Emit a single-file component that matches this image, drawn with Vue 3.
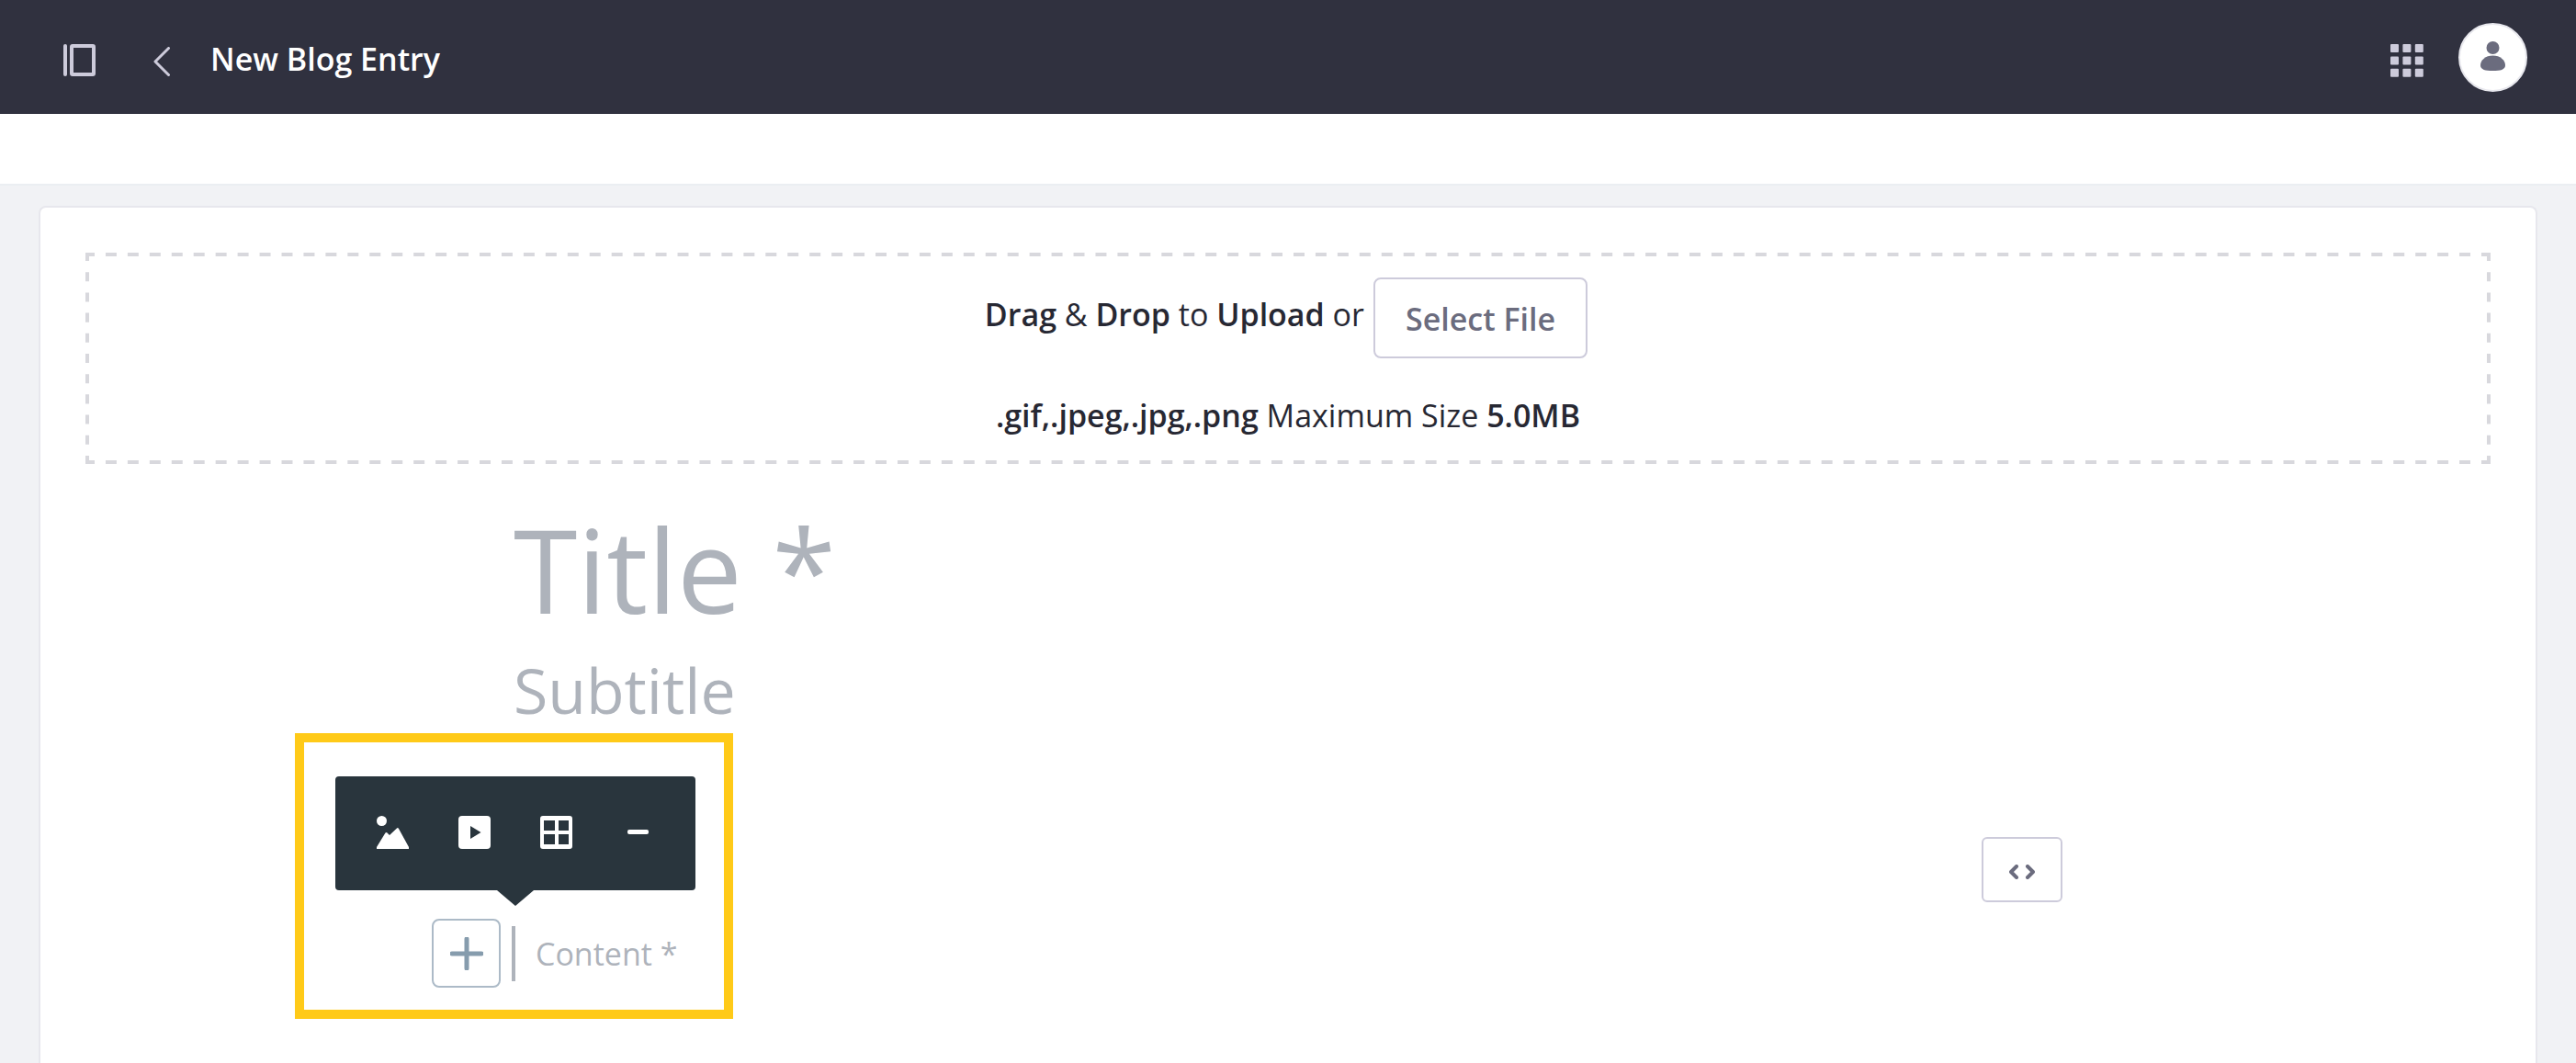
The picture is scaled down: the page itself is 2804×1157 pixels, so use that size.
<script setup>
import { ref } from 'vue'

const title = ref('')
const subtitle = ref('')
const content = ref('')
const gridCells = [0, 1, 2].flatMap((row) => [0, 1, 2].map((col) => ({ x: col * 13.4, y: row * 13.4 })))
</script>

<template>
  <div class="page">
    <header class="topbar">
      <button class="icon-btn" type="button" aria-label="Toggle product menu">
        <svg width="36" height="36" viewBox="0 0 36 36">
          <rect x="0" y="0" width="4" height="35" rx="2" fill="#cdcbdb" />
          <rect x="9" y="2" width="24" height="31" rx="1" fill="none" stroke="#cdcbdb" stroke-width="4" />
        </svg>
      </button>
      <a class="back" href="#" aria-label="Back">
        <svg width="18" height="32" viewBox="0 0 18 32">
          <path d="M16.500 1.500 L2 16 L16.500 30.500" fill="none" stroke="#cdcbdb" stroke-width="3" stroke-linecap="round" stroke-linejoin="round" />
        </svg>
      </a>
      <h1>New Blog Entry</h1>
      <div class="topbar-right">
        <button class="icon-btn" type="button" aria-label="Applications">
          <svg width="36" height="36" viewBox="0 0 36 36">
            <rect v-for="c in gridCells" :key="`${c.x}-${c.y}`" :x="c.x" :y="c.y" width="9" height="9" rx="1" fill="#cdcbdb" />
          </svg>
        </button>
        <button class="avatar" type="button" aria-label="User">
          <svg width="28" height="34" viewBox="0 0 28 34">
            <circle cx="13.500" cy="7" r="7" fill="#6b6c7e" />
            <path d="M13.500 15.500 C21.500 15.500 27 20.500 27 26 C27 31 21.500 32 13.500 32 C5.500 32 0 31 0 26 C0 20.500 5.500 15.500 13.500 15.500 Z" fill="#6b6c7e" />
          </svg>
        </button>
      </div>
    </header>

    <div class="subbar"></div>

    <main class="main">
      <section class="card">
        <div class="dropzone">
          <svg class="dashes" aria-hidden="true">
            <line class="h" x1="0" y1="0" x2="100%" y2="0" pathLength="2624" />
            <line class="h" x1="0" y1="100%" x2="100%" y2="100%" pathLength="2624" />
            <line class="v" x1="0" y1="0" x2="0" y2="100%" pathLength="228" />
            <line class="v" x1="100%" y1="0" x2="100%" y2="100%" pathLength="228" />
          </svg>
          <p class="drop-line">
            <span><strong>Drag</strong> &amp; <strong>Drop</strong> to <strong>Upload</strong> or</span>
            <button class="select-file" type="button">Select File</button>
          </p>
          <p class="types"><strong>.gif,.jpeg,.jpg,.png</strong> Maximum Size <strong>5.0MB</strong></p>
        </div>

        <form class="editor" @submit.prevent>
          <input v-model="title" class="title" type="text" placeholder="Title *" aria-label="Title" />
          <input v-model="subtitle" class="subtitle" type="text" placeholder="Subtitle" aria-label="Subtitle" />
          <div class="content-row">
            <div class="content">
              <input v-model="content" type="text" placeholder="Content *" aria-label="Content" />
              <div class="highlight"></div>
              <button class="add" type="button" aria-label="Add">
                <svg width="36" height="36" viewBox="0 0 36 36">
                  <path d="M18 2 V34 M2 18 H34" fill="none" stroke="#869cad" stroke-width="5" stroke-linecap="round" />
                </svg>
              </button>
              <div class="toolbar" role="toolbar" aria-label="Insert">
                <button type="button" aria-label="Image">
                  <svg width="36" height="36" viewBox="0 0 36 36" fill="#fff">
                    <circle cx="5.500" cy="5.500" r="5.500" />
                    <path d="M0 34 L9.500 18.500 Q10.500 17.500 11.500 18.500 L14 21 L22 13.500 Q23 12.500 24 14 L35 34 V36 H0 Z" />
                  </svg>
                </button>
                <button type="button" aria-label="Video">
                  <svg width="36" height="36" viewBox="0 0 36 36">
                    <rect width="35" height="36" rx="4" fill="#fff" />
                    <path d="M13 11 L24.500 18 L13 25 Z" fill="#29353d" />
                  </svg>
                </button>
                <button type="button" aria-label="Table">
                  <svg width="36" height="36" viewBox="0 0 36 36">
                    <path fill="#fff" fill-rule="evenodd" d="M3 0 H32 Q35 0 35 3 V33 Q35 36 32 36 H3 Q0 36 0 33 V3 Q0 0 3 0 Z M4 5 V16 H16 V5 Z M20 5 V16 H31 V5 Z M4 20 V31 H16 V20 Z M20 20 V31 H31 V20 Z" />
                  </svg>
                </button>
                <button type="button" aria-label="Horizontal line">
                  <svg width="36" height="36" viewBox="0 0 36 36">
                    <rect x="6" y="15" width="23" height="5" rx="2" fill="#fff" />
                  </svg>
                </button>
              </div>
            </div>
            <button class="code" type="button" aria-label="Source code">
              <svg width="28" height="16" viewBox="0 0 28 16">
                <path d="M8 2 L2 8 L8 14 M20 2 L26 8 L20 14" fill="none" stroke="#6b6c7e" stroke-width="4" stroke-linecap="round" stroke-linejoin="round" />
              </svg>
            </button>
          </div>
        </form>
      </section>
    </main>
  </div>
</template>

<style>
body {
  margin: 0;
  background: #f1f2f5;
}
</style>

<style scoped>
.page {
  display: flex;
  flex-direction: column;
  min-height: 100vh;
  font-family: "Open Sans", "Noto Sans", sans-serif;
  font-size: 34px;
  line-height: 48px;
  color: #272833;
}

.page * {
  box-sizing: border-box;
}

button,
input {
  font: inherit;
  margin: 0;
  padding: 0;
  border: 0;
  background: none;
}

svg {
  display: block;
}

strong {
  font-weight: 600;
}

.topbar {
  display: flex;
  align-items: center;
  height: 124px;
  padding: 0 53px 0 69px;
  background: #30313f;
}

.icon-btn {
  padding-top: 8px;
}

.back {
  margin: 10px 44px 0 62px;
}

h1 {
  margin: 0;
  padding-top: 4px;
  font-size: 34px;
  font-weight: 600;
  color: #fff;
}

.topbar-right {
  display: flex;
  align-items: center;
  gap: 38px;
  margin-left: auto;
}

.avatar {
  display: flex;
  align-items: center;
  justify-content: center;
  width: 75px;
  height: 75px;
  border: 2px solid #e7e7ed;
  border-radius: 50%;
  background: #fff;
}

.subbar {
  height: 78px;
  background: #fff;
  border-bottom: 2px solid #ebeef2;
}

.main {
  display: flex;
  flex: 1;
  padding: 22px 42px 0;
}

.card {
  flex: 1;
  padding: 49px;
  background: #fff;
  border: 2px solid #e7e7ed;
  border-bottom: 0;
  border-radius: 8px 8px 0 0;
}

.dropzone {
  position: relative;
  height: 230px;
  padding-top: 27px;
  text-align: center;
}

.dashes {
  position: absolute;
  inset: 0;
  width: 100%;
  height: 100%;
}

.dashes line {
  stroke: #d8d8dd;
  stroke-width: 8px;
}

.h {
  stroke-dasharray: 12 12;
  stroke-dashoffset: 2px;
}

.v {
  stroke-dasharray: 10 12;
  stroke-dashoffset: 1px;
}

.dropzone p {
  position: relative;
  margin: 0;
}

.drop-line {
  display: flex;
  justify-content: center;
  gap: 10px;
  padding-right: 4px;
}

.drop-line span {
  padding-top: 16px;
}

.select-file {
  height: 88px;
  padding: 2px 33px 0;
  border: 2px solid #cdcbdb;
  border-radius: 8px;
  font-weight: 600;
  color: #6b6c7e;
}

.dropzone .types {
  margin-top: 38px;
}

.editor {
  max-width: 1690px;
  margin: 34px auto 0;
}

input {
  display: block;
  width: 100%;
  color: #272833;
}

input::placeholder {
  color: #aeb3bb;
  opacity: 1;
}

.title {
  height: 160px;
  padding-left: 2px;
  font-size: 126px;
}

.subtitle {
  height: 96px;
  padding: 6px 0 0 2px;
  font-size: 68px;
}

.content-row {
  display: flex;
  align-items: flex-start;
  justify-content: space-between;
  margin-top: 116px;
  padding-right: 2px;
}

.content {
  position: relative;
  flex: 1;
  margin-top: 97px;
  padding-left: 22px;
  border-left: 4px solid #aeb3bb;
}

.content input {
  height: 60px;
}

.highlight {
  position: absolute;
  top: -210px;
  left: -240px;
  width: 477px;
  height: 311px;
  border: 10px solid #ffca18;
  pointer-events: none;
}

.add {
  position: absolute;
  top: -8px;
  left: -91px;
  display: flex;
  align-items: center;
  justify-content: center;
  width: 75px;
  height: 75px;
  border: 2px solid #acbac7;
  border-radius: 8px;
}

.toolbar {
  position: absolute;
  top: -163px;
  left: -196px;
  display: flex;
  justify-content: center;
  gap: 53px;
  width: 392px;
  height: 124px;
  padding-bottom: 2px;
  border-radius: 4px;
  background: #29353d;
}

.toolbar::after {
  content: "";
  position: absolute;
  top: 100%;
  left: 50%;
  margin-left: -20px;
  border: 20px solid transparent;
  border-top: 17px solid #29353d;
  border-bottom: 0;
}

.code {
  display: flex;
  align-items: center;
  justify-content: center;
  width: 88px;
  height: 71px;
  padding-top: 4px;
  border: 2px solid #cdcbdb;
  border-radius: 6px;
}
</style>
